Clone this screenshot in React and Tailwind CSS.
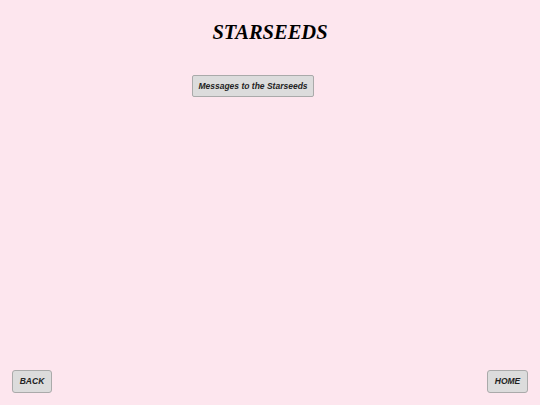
export default function App() {
  return (
    <div className="w-[540px] h-[405px] bg-[#fde6ee] flex flex-col relative" style={{ fontFamily: '"Liberation Sans", Arial, sans-serif' }}>
      <h1 className="text-center pt-[19px] text-[20.5px] leading-[26px] font-bold italic text-black" style={{ fontFamily: '"Liberation Serif", "Times New Roman", serif' }}>
        STARSEEDS
      </h1>
      <div className="pl-[192px] pt-[27px]">
        <button className="w-[122px] h-[22px] bg-[#dcdcdc] border border-[#aaaaaa] rounded-[2px] text-[8.5px] font-bold italic text-[#222]">
          Messages to the Starseeds
        </button>
      </div>
      <div className="mt-auto flex justify-between px-[12px] pb-[12px]">
        <button className="w-[40px] h-[23px] bg-[#dcdcdc] border border-[#aaaaaa] rounded-[3px] text-[8.5px] font-bold italic text-[#222]">BACK</button>
        <button className="w-[41px] h-[23px] bg-[#dcdcdc] border border-[#aaaaaa] rounded-[3px] text-[8.5px] font-bold italic text-[#222]">HOME</button>
      </div>
    </div>
  );
}
